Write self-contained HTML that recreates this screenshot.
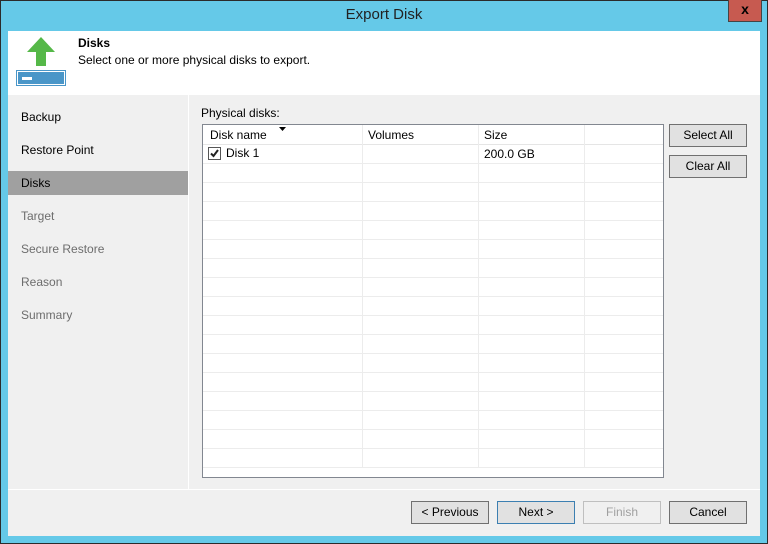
<!DOCTYPE html>
<html><head><style>
*{margin:0;padding:0;box-sizing:border-box}
body{width:768px;height:544px;background:#65c9e8;font-family:"Liberation Sans",sans-serif;font-size:12px;color:#000;position:relative;overflow:hidden}
.abs{position:absolute}
#w{position:absolute;left:1px;top:0;width:768px;height:544px}
.title{left:-1px;width:768px;top:6px;text-align:center;font-size:15px;color:#222}
.close{left:727px;top:0;width:34px;height:22px;background:#c75a50;border:1px solid #444;border-top:none;color:#000;font-weight:bold;text-align:center;font-size:14px;line-height:19px}
.client{left:7px;top:31px;width:752px;height:505px;background:#f0f0f0}
.hdr{left:7px;top:31px;width:752px;height:64px;background:#fff}
.nav{left:7px;width:180px;height:24px;padding-left:13px;line-height:23px;font-size:12px}
.btn{height:23px;border:1px solid #707070;background:#e1e1e1;text-align:center;line-height:21px;font-size:12px}
.grid{left:201px;top:124px;width:462px;height:354px;background:#fff;border:1px solid #828790;overflow:hidden}
.row{position:absolute;left:0;width:460px;height:19px;border-bottom:1px solid #ececec}
.vl{position:absolute;top:0;width:1px;height:342px;background:#ececec}
</style></head><body>
<div class="abs" style="left:0;top:0;width:768px;height:544px;border:1px solid #2b2b2b"></div>
<div id="w">
<div class="abs title">Export Disk</div>
<div class="abs close">x</div>
<div class="abs client"></div>
<div class="abs hdr"></div>
<svg class="abs" style="left:15px;top:36px" width="51" height="51">
<polygon points="25,1 39,16 30,16 30,30 20,30 20,16 11,16" fill="#55b848"/>
<rect x="0.5" y="34.5" width="49" height="15" fill="#fff" stroke="#4a96c8"/>
<rect x="2" y="36" width="46" height="12" fill="#4a96c8"/>
<rect x="6" y="41" width="10" height="3" fill="#fff"/>
</svg>
<div class="abs" style="left:77px;top:36px;font-weight:bold;font-size:12px">Disks</div>
<div class="abs" style="left:77px;top:53px">Select one or more physical disks to export.</div>
<div class="abs" style="left:7px;top:95px;width:181px;height:394px;background:#f0f0f0;border-right:1px solid #fff"></div>
<div class="abs nav" style="top:106px">Backup</div>
<div class="abs nav" style="top:139px">Restore Point</div>
<div class="abs nav" style="top:171px;background:#a0a0a0;line-height:24px">Disks</div>
<div class="abs nav" style="top:205px;color:#6d6d6d">Target</div>
<div class="abs nav" style="top:238px;color:#6d6d6d">Secure Restore</div>
<div class="abs nav" style="top:271px;color:#6d6d6d">Reason</div>
<div class="abs nav" style="top:304px;color:#6d6d6d">Summary</div>
<div class="abs" style="left:200px;top:106px">Physical disks:</div>
<div class="abs grid">
<div class="row" style="top:0;height:20px;border-bottom:1px solid #e5e5e5"></div>
<div class="vl" style="left:159px"></div><div class="vl" style="left:275px"></div><div class="vl" style="left:381px"></div>
<div class="row" style="top:20px"></div><div class="row" style="top:39px"></div><div class="row" style="top:58px"></div><div class="row" style="top:77px"></div><div class="row" style="top:96px"></div><div class="row" style="top:115px"></div><div class="row" style="top:134px"></div><div class="row" style="top:153px"></div><div class="row" style="top:172px"></div><div class="row" style="top:191px"></div><div class="row" style="top:210px"></div><div class="row" style="top:229px"></div><div class="row" style="top:248px"></div><div class="row" style="top:267px"></div><div class="row" style="top:286px"></div><div class="row" style="top:305px"></div><div class="row" style="top:324px"></div>
<div class="abs" style="left:7px;top:3px">Disk name</div>
<svg class="abs" style="left:76px;top:2px" width="8" height="5"><polygon points="0,0 7,0 3.5,4" fill="#000"/></svg>
<div class="abs" style="left:165px;top:3px">Volumes</div>
<div class="abs" style="left:281px;top:3px">Size</div>
<div class="abs" style="left:5px;top:22px;width:13px;height:13px;border:1px solid #555;background:#fff"></div>
<svg class="abs" style="left:6px;top:23px" width="11" height="11"><path d="M2 5.5 L4.5 8 L9 2" stroke="#222" stroke-width="2" fill="none"/></svg>
<div class="abs" style="left:23px;top:21px">Disk 1</div>
<div class="abs" style="left:281px;top:22px">200.0 GB</div>
</div>
<div class="abs btn" style="left:668px;top:124px;width:78px">Select All</div>
<div class="abs btn" style="left:668px;top:155px;width:78px">Clear All</div>
<div class="abs" style="left:7px;top:489px;width:752px;height:1px;background:#fff"></div>
<div class="abs btn" style="left:410px;top:501px;width:78px">&lt; Previous</div>
<div class="abs btn" style="left:496px;top:501px;width:78px;border-color:#3c7fb1">Next &gt;</div>
<div class="abs btn" style="left:582px;top:501px;width:78px;border-color:#bfbfbf;background:#f0f0f0;color:#a0a0a0">Finish</div>
<div class="abs btn" style="left:668px;top:501px;width:78px">Cancel</div>
</div>
</body></html>
